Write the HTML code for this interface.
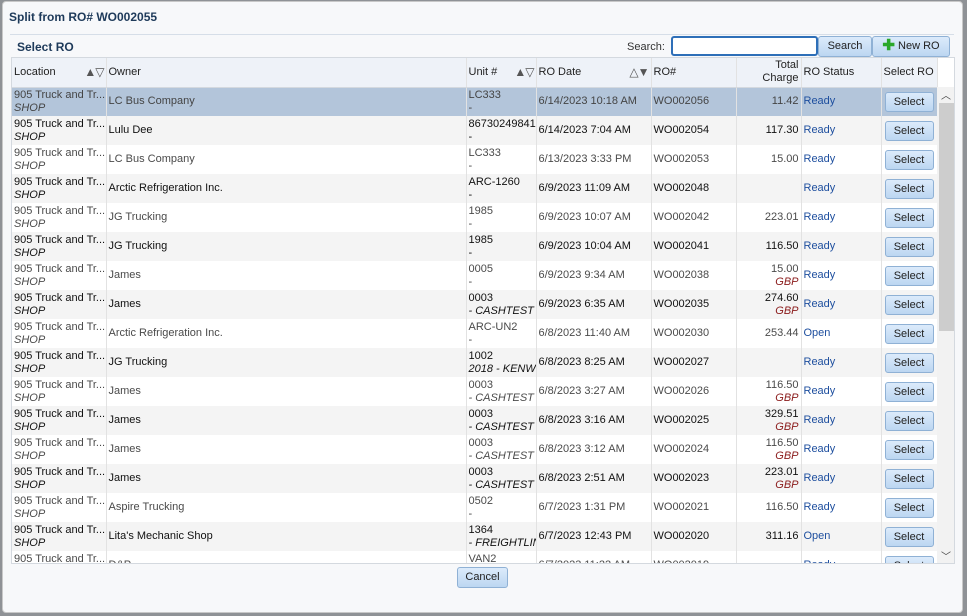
<!DOCTYPE html>
<html><head><style>
*{box-sizing:border-box;margin:0;padding:0}
body{width:967px;height:616px;background:#8f9296;font-family:"Liberation Sans",sans-serif;font-size:11px;position:relative;overflow:hidden}
.dlg{position:absolute;left:2px;top:1px;width:961px;height:612px;background:#f7f8fa;border:1px solid #c8c8c8;border-radius:4px}
.title{position:absolute;left:6px;top:8px;font-size:12px;font-weight:bold;color:#1e3a5a}
.sep{position:absolute;left:7px;top:32px;width:944px;border-top:1px solid #d6dee8}
.sub{position:absolute;left:14px;top:38px;font-size:12px;font-weight:bold;color:#1e3a5a}
.slabel{position:absolute;left:624px;top:39px;color:#333}
.sinput{position:absolute;left:668px;top:34px;width:147px;height:20px;border:2px solid #2e6fb8;border-radius:3px;background:#fff}
.btn{position:absolute;background:linear-gradient(#dcebfb,#bcd6f1);border:1px solid #8fb1d5;border-radius:3px;color:#222;text-align:center;font-size:11px}
.grid{position:absolute;left:8px;top:55px;width:944px;height:507px;overflow:hidden;border:1px solid #d4d9df;background:#fff}
table{position:absolute;left:0;top:0;border-collapse:collapse;table-layout:fixed;width:925px}
td,th{border-right:1px solid #e2e2e2;padding:0 2px;height:29px;overflow:hidden;white-space:nowrap;vertical-align:middle;font-weight:normal;text-align:left;line-height:13px}
th{background:#eef2f8;color:#222;border-bottom:1px solid #d4d9df}
tr.o td{background:#fff;color:#4a4a4a}
tr.e td{background:#f4f4f4;color:#111}
tr.sel td{background:#b3c5da;color:#444}
td.n{text-align:right}
tr td.st{color:#1d4e9e}
i{font-style:italic}
.gbp{color:#8a1a1a;font-style:italic;display:block;text-align:right}
.sb{display:inline-block;width:49px;height:20px;line-height:18px;background:linear-gradient(#dcebfb,#bcd6f1);border:1px solid #8fb1d5;border-radius:3px;text-align:center;color:#222;margin-left:1px}
.scroll{position:absolute;left:925px;top:29px;width:17px;height:478px;background:#f2f2f2}
.thumb{position:absolute;left:2px;top:16px;width:15px;height:228px;background:#cdcdcd}
.tri{font-size:12px;color:#555;letter-spacing:-1px;float:right}
</style></head><body>
<div class="dlg">
<div class="title">Split from RO# WO002055</div>
<div class="sep"></div>
<div class="sub">Select RO</div>
<div class="slabel">Search:</div>
<div class="sinput"></div>
<div class="btn" style="left:815px;top:34px;width:54px;height:21px;line-height:19px">Search</div>
<div class="btn" style="left:869px;top:34px;width:78px;height:21px;line-height:19px"><span style="color:#2aa82a;font-weight:bold;font-size:15px;line-height:14px;vertical-align:-1px">✚</span> New RO</div>
<div class="grid">
<table>
<colgroup><col style="width:94px"><col style="width:360px"><col style="width:70px"><col style="width:115px"><col style="width:85px"><col style="width:65px"><col style="width:80px"><col style="width:56px"></colgroup>
<tr><th>Location <span class="tri">▲▽</span></th><th>Owner</th><th>Unit # <span class="tri">▲▽</span></th><th>RO Date <span class="tri">△▼</span></th><th>RO#</th><th style="text-align:right">Total<br>Charge</th><th>RO Status</th><th>Select RO</th></tr>
<tr class="sel"><td>905 Truck and Tr...<br><i>SHOP</i></td><td>LC Bus Company</td><td>LC333<br>-</td><td>6/14/2023 10:18 AM</td><td>WO002056</td><td class="n">11.42</td><td class="st">Ready</td><td><span class="sb">Select</span></td></tr>
<tr class="e"><td>905 Truck and Tr...<br><i>SHOP</i></td><td>Lulu Dee</td><td>86730249841<br>-</td><td>6/14/2023 7:04 AM</td><td>WO002054</td><td class="n">117.30</td><td class="st">Ready</td><td><span class="sb">Select</span></td></tr>
<tr class="o"><td>905 Truck and Tr...<br><i>SHOP</i></td><td>LC Bus Company</td><td>LC333<br>-</td><td>6/13/2023 3:33 PM</td><td>WO002053</td><td class="n">15.00</td><td class="st">Ready</td><td><span class="sb">Select</span></td></tr>
<tr class="e"><td>905 Truck and Tr...<br><i>SHOP</i></td><td>Arctic Refrigeration Inc.</td><td>ARC-1260<br>-</td><td>6/9/2023 11:09 AM</td><td>WO002048</td><td class="n"></td><td class="st">Ready</td><td><span class="sb">Select</span></td></tr>
<tr class="o"><td>905 Truck and Tr...<br><i>SHOP</i></td><td>JG Trucking</td><td>1985<br>-</td><td>6/9/2023 10:07 AM</td><td>WO002042</td><td class="n">223.01</td><td class="st">Ready</td><td><span class="sb">Select</span></td></tr>
<tr class="e"><td>905 Truck and Tr...<br><i>SHOP</i></td><td>JG Trucking</td><td>1985<br>-</td><td>6/9/2023 10:04 AM</td><td>WO002041</td><td class="n">116.50</td><td class="st">Ready</td><td><span class="sb">Select</span></td></tr>
<tr class="o"><td>905 Truck and Tr...<br><i>SHOP</i></td><td>James</td><td>0005<br>-</td><td>6/9/2023 9:34 AM</td><td>WO002038</td><td class="n">15.00<span class="gbp">GBP</span></td><td class="st">Ready</td><td><span class="sb">Select</span></td></tr>
<tr class="e"><td>905 Truck and Tr...<br><i>SHOP</i></td><td>James</td><td>0003<br><i>- CASHTEST T</i></td><td>6/9/2023 6:35 AM</td><td>WO002035</td><td class="n">274.60<span class="gbp">GBP</span></td><td class="st">Ready</td><td><span class="sb">Select</span></td></tr>
<tr class="o"><td>905 Truck and Tr...<br><i>SHOP</i></td><td>Arctic Refrigeration Inc.</td><td>ARC-UN2<br>-</td><td>6/8/2023 11:40 AM</td><td>WO002030</td><td class="n">253.44</td><td class="st">Open</td><td><span class="sb">Select</span></td></tr>
<tr class="e"><td>905 Truck and Tr...<br><i>SHOP</i></td><td>JG Trucking</td><td>1002<br><i>2018 - KENWO</i></td><td>6/8/2023 8:25 AM</td><td>WO002027</td><td class="n"></td><td class="st">Ready</td><td><span class="sb">Select</span></td></tr>
<tr class="o"><td>905 Truck and Tr...<br><i>SHOP</i></td><td>James</td><td>0003<br><i>- CASHTEST T</i></td><td>6/8/2023 3:27 AM</td><td>WO002026</td><td class="n">116.50<span class="gbp">GBP</span></td><td class="st">Ready</td><td><span class="sb">Select</span></td></tr>
<tr class="e"><td>905 Truck and Tr...<br><i>SHOP</i></td><td>James</td><td>0003<br><i>- CASHTEST T</i></td><td>6/8/2023 3:16 AM</td><td>WO002025</td><td class="n">329.51<span class="gbp">GBP</span></td><td class="st">Ready</td><td><span class="sb">Select</span></td></tr>
<tr class="o"><td>905 Truck and Tr...<br><i>SHOP</i></td><td>James</td><td>0003<br><i>- CASHTEST T</i></td><td>6/8/2023 3:12 AM</td><td>WO002024</td><td class="n">116.50<span class="gbp">GBP</span></td><td class="st">Ready</td><td><span class="sb">Select</span></td></tr>
<tr class="e"><td>905 Truck and Tr...<br><i>SHOP</i></td><td>James</td><td>0003<br><i>- CASHTEST T</i></td><td>6/8/2023 2:51 AM</td><td>WO002023</td><td class="n">223.01<span class="gbp">GBP</span></td><td class="st">Ready</td><td><span class="sb">Select</span></td></tr>
<tr class="o"><td>905 Truck and Tr...<br><i>SHOP</i></td><td>Aspire Trucking</td><td>0502<br>-</td><td>6/7/2023 1:31 PM</td><td>WO002021</td><td class="n">116.50</td><td class="st">Ready</td><td><span class="sb">Select</span></td></tr>
<tr class="e"><td>905 Truck and Tr...<br><i>SHOP</i></td><td>Lita's Mechanic Shop</td><td>1364<br><i>- FREIGHTLIN</i></td><td>6/7/2023 12:43 PM</td><td>WO002020</td><td class="n">311.16</td><td class="st">Open</td><td><span class="sb">Select</span></td></tr>
<tr class="o"><td>905 Truck and Tr...<br><i>SHOP</i></td><td>D&amp;P</td><td>VAN2<br>-</td><td>6/7/2023 11:22 AM</td><td>WO002019</td><td class="n"></td><td class="st">Ready</td><td><span class="sb">Select</span></td></tr>
</table>
<div class="scroll"><div style="position:absolute;left:4px;top:0;font-size:10px;color:#444">︿</div><div class="thumb"></div><div style="position:absolute;left:4px;bottom:2px;font-size:10px;color:#444">﹀</div></div>
</div>
<div class="btn" style="left:454px;top:565px;width:51px;height:21px;line-height:19px">Cancel</div>
</div>
</body></html>
